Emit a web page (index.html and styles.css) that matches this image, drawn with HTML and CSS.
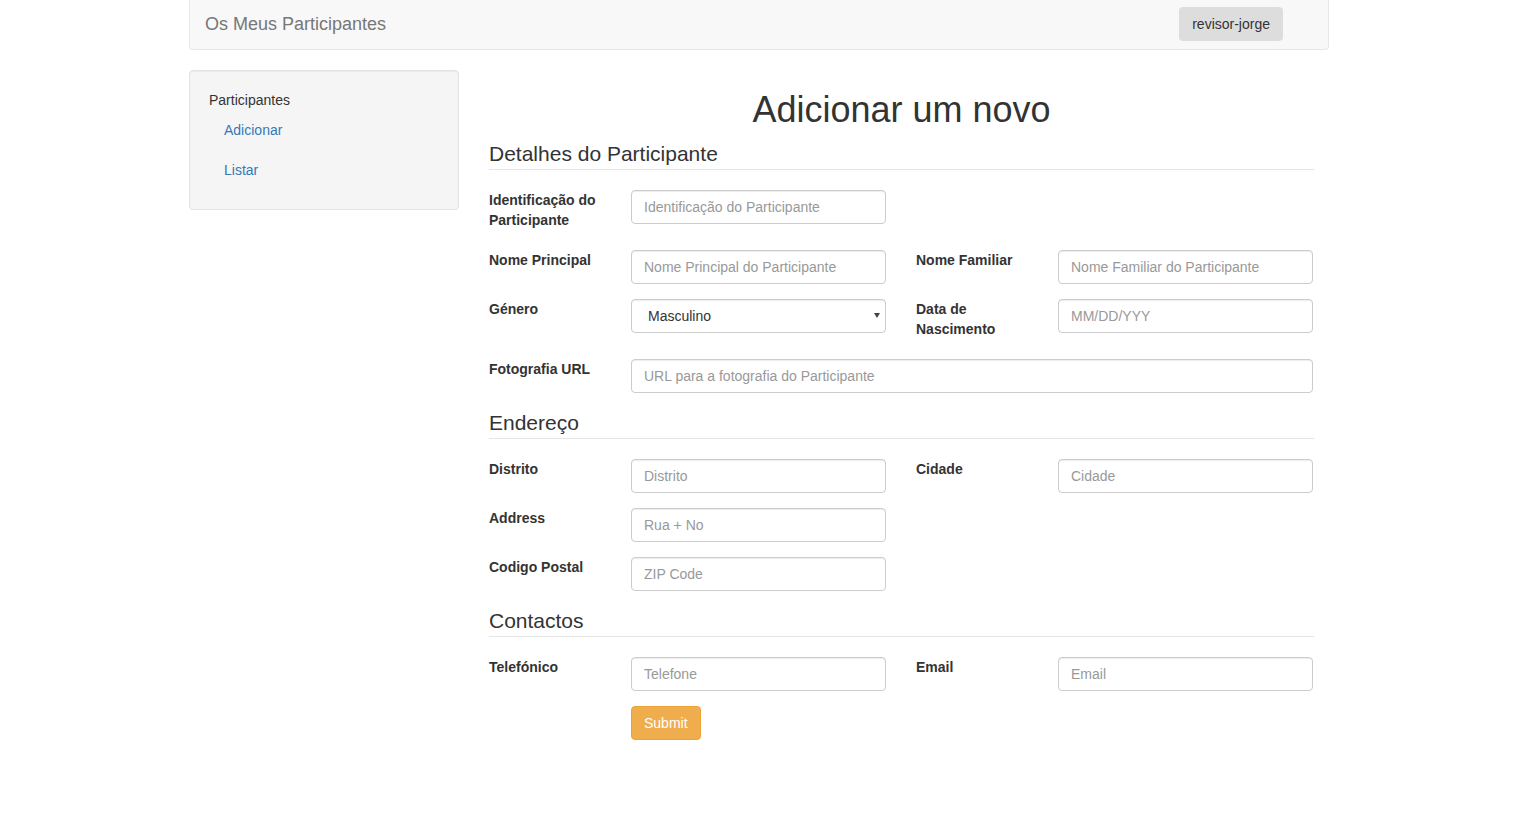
FILE: index.html
```html
<!DOCTYPE html>
<html lang="pt">
<head>
<meta charset="utf-8">
<title>Adicionar um novo</title>
<link rel="stylesheet" href="styles.css">
</head>
<body>
<div class="page">
  <nav class="navbar">
    <span class="brand">Os Meus Participantes</span>
    <span class="user-btn">revisor-jorge</span>
  </nav>
  <div class="layout">
    <aside class="sidebar">
      <div class="side-title">Participantes</div>
      <a class="side-link" href="#">Adicionar</a>
      <a class="side-link" href="#">Listar</a>
    </aside>
    <main class="main">
      <h1 class="title">Adicionar um novo</h1>
      <form class="form">
        <div class="legend">Detalhes do Participante</div>
        <div class="row">
          <div class="field">
            <label class="label">Identificação do Participante</label>
            <input class="input" type="text" placeholder="Identificação do Participante">
          </div>
        </div>
        <div class="row">
          <div class="field">
            <label class="label">Nome Principal</label>
            <input class="input" type="text" placeholder="Nome Principal do Participante">
          </div>
          <div class="field">
            <label class="label">Nome Familiar</label>
            <input class="input" type="text" placeholder="Nome Familiar do Participante">
          </div>
        </div>
        <div class="row">
          <div class="field">
            <label class="label">Género</label>
            <div class="select-wrap">
              <select class="input select">
                <option>Masculino</option>
                <option>Feminino</option>
              </select>
              <span class="caret"></span>
            </div>
          </div>
          <div class="field">
            <label class="label">Data de Nascimento</label>
            <input class="input" type="text" placeholder="MM/DD/YYY">
          </div>
        </div>
        <div class="row">
          <div class="field wide">
            <label class="label">Fotografia URL</label>
            <input class="input" type="text" placeholder="URL para a fotografia do Participante">
          </div>
        </div>

        <div class="legend">Endereço</div>
        <div class="row">
          <div class="field">
            <label class="label">Distrito</label>
            <input class="input" type="text" placeholder="Distrito">
          </div>
          <div class="field">
            <label class="label">Cidade</label>
            <input class="input" type="text" placeholder="Cidade">
          </div>
        </div>
        <div class="row">
          <div class="field">
            <label class="label">Address</label>
            <input class="input" type="text" placeholder="Rua + No">
          </div>
        </div>
        <div class="row">
          <div class="field">
            <label class="label">Codigo Postal</label>
            <input class="input" type="text" placeholder="ZIP Code">
          </div>
        </div>

        <div class="legend">Contactos</div>
        <div class="row">
          <div class="field">
            <label class="label">Telefónico</label>
            <input class="input" type="text" placeholder="Telefone">
          </div>
          <div class="field">
            <label class="label">Email</label>
            <input class="input" type="text" placeholder="Email">
          </div>
        </div>
        <div class="row actions">
          <button class="btn-submit" type="button">Submit</button>
        </div>
      </form>
    </main>
  </div>
</div>
</body>
</html>
```
FILE: styles.css
```css
html, body {
  margin: 0;
  padding: 0;
  background: #fff;
}
body {
  font-family: "Liberation Sans", Arial, sans-serif;
  font-size: 14px;
  line-height: 20px;
  color: #333;
}
* { box-sizing: border-box; }

.page {
  width: 1140px;
  margin-left: calc(50% - 580px);
}

.navbar {
  height: 50px;
  background: #f8f8f8;
  border: 1px solid #e7e7e7;
  border-top: 0;
  border-radius: 0 0 4px 4px;
  display: flex;
  align-items: center;
  justify-content: space-between;
  padding: 0 45px 1px 15px;
  margin-bottom: 20px;
}
.brand {
  font-size: 18px;
  line-height: 20px;
  color: #777;
}
.user-btn {
  display: block;
  height: 34px;
  padding: 7px 13px;
  background: #dddddd;
  border-radius: 4px;
  color: #333;
  line-height: 20px;
}

.layout {
  display: flex;
  gap: 30px;
  align-items: flex-start;
}

.sidebar {
  width: 270px;
  padding: 19px;
  background: #f5f5f5;
  border: 1px solid #e3e3e3;
  border-radius: 4px;
  box-shadow: inset 0 1px 1px rgba(0,0,0,.05);
  display: flex;
  flex-direction: column;
}
.side-title {
  line-height: 20px;
  color: #333;
}
.side-link {
  display: block;
  padding: 10px 15px;
  color: #337ab7;
  text-decoration: none;
  line-height: 20px;
}

.main {
  width: 825px;
}
.title {
  margin: 20px 0 10px;
  font-size: 36px;
  font-weight: 500;
  line-height: 39px;
  text-align: center;
  color: #333;
}

.legend {
  font-size: 21px;
  line-height: 30px;
  color: #333;
  border-bottom: 1px solid #e5e5e5;
  margin-bottom: 20px;
}

.row {
  display: flex;
  gap: 30px;
  margin-bottom: 15px;
  align-items: flex-start;
}
.field {
  display: flex;
  align-items: flex-start;
}
.label {
  width: 142px;
  padding-right: 15px;
  font-weight: bold;
  line-height: 20px;
  margin-bottom: 5px;
}
.input {
  display: block;
  width: 255px;
  height: 34px;
  padding: 6px 12px;
  font-family: inherit;
  font-size: 14px;
  line-height: 20px;
  color: #555;
  background: #fff;
  border: 1px solid #ccc;
  border-radius: 4px;
  box-shadow: inset 0 1px 1px rgba(0,0,0,.075);
  outline: none;
}
.input::placeholder {
  color: #999;
  opacity: 1;
}
.wide .input {
  width: 682px;
}

.select-wrap {
  position: relative;
}
.select {
  -webkit-appearance: none;
  appearance: none;
  padding-left: 16px;
  color: #333;
}
.caret {
  position: absolute;
  right: 6px;
  top: 14px;
  width: 0;
  height: 0;
  border-left: 3px solid transparent;
  border-right: 3px solid transparent;
  border-top: 5px solid #444;
  pointer-events: none;
}

.actions {
  padding-left: 142px;
}
.btn-submit {
  height: 34px;
  padding: 6px 12px;
  font-family: inherit;
  font-size: 14px;
  line-height: 20px;
  color: #fff;
  background: #f0ad4e;
  border: 1px solid #eea236;
  border-radius: 4px;
  cursor: pointer;
}
```
